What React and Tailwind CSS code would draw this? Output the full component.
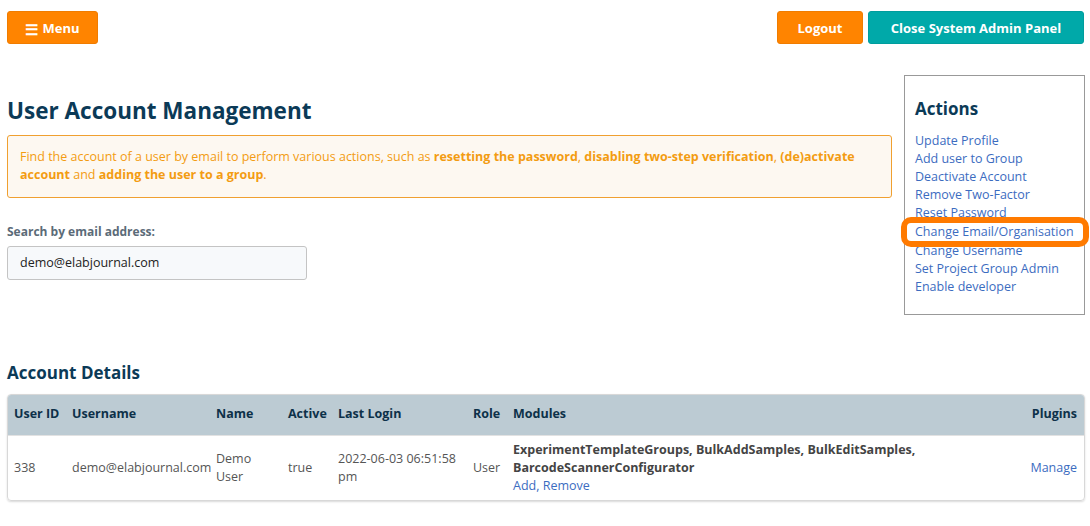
const actions = [
  'Update Profile',
  'Add user to Group',
  'Deactivate Account',
  'Remove Two-Factor',
  'Reset Password',
  'Change Email/Organisation',
  'Change Username',
  'Set Project Group Admin',
  'Enable developer',
];

export default function App() {
  return (
    <div className="min-h-[526px] bg-white text-[12.5px] text-[#555] font-['Open_Sans',sans-serif] pl-[7px] pr-[5px] pt-[11px]">
      <div className="flex items-start justify-between">
        <button className="h-[33px] w-[91px] rounded-[3px] bg-[#ff8400] border border-[#f07c00] text-white font-bold text-[13px] flex items-center justify-center gap-1 pt-[3px]">
          <span className="text-[15px] leading-none">☰</span> Menu
        </button>
        <div className="flex gap-[5px] mr-[1px]">
          <button className="h-[33px] w-[86px] rounded-[3px] bg-[#ff8400] border border-[#f07c00] text-white font-bold text-[13px] pt-[3px]">Logout</button>
          <button className="h-[33px] w-[216px] rounded-[3px] bg-[#00a9a9] border border-[#009d9d] text-white font-bold text-[13px] pt-[3px]">Close System Admin Panel</button>
        </div>
      </div>

      <div className="flex gap-[12px] mt-[31px]">
        <div className="flex-1">
          <h1 className="mt-[21px] text-[22.5px] font-bold text-[#0b3a57] leading-[30px]">User Account Management</h1>
          <div className="mt-[9px] rounded-[3px] border border-[#f0a030] bg-[#fdf8f1] text-[#f39c12] px-[12px] pt-[12px] pb-[13px] leading-[18px]">
            Find the account of a user by email to perform various actions, such as <b>resetting the password</b>, <b>disabling two-step verification</b>, <b>(de)activate account</b> and <b>adding the user to a group</b>.
          </div>
          <label className="block mt-[25px] text-[12px] font-bold text-[#5b6b78]">Search by email address:</label>
          <div className="mt-[5px] w-[300px] h-[34px] rounded-[3px] border border-[#c4c4c4] bg-[#f7f9fb] px-[12px] flex items-center text-[#222]">demo@elabjournal.com</div>
        </div>
        <div className="w-[181px] h-[240px] border border-[#999] px-[10px] pt-[21px]">
          <h2 className="text-[17px] font-bold text-[#0b3a57] leading-[24px]">Actions</h2>
          <ul className="mt-[11px] leading-[18px] text-[#3c6cbf] whitespace-nowrap">
            {actions.map((a) => (
              <li key={a} className={a === 'Change Email/Organisation' ? 'relative z-10 my-[1px]' : ''}>
                {a === 'Change Email/Organisation' && (
                  <span className="absolute left-[-14px] right-[-15px] top-[-6px] bottom-[-6px] border-[6px] border-[#ff7a00] rounded-[10px] bg-white -z-10"></span>
                )}
                <a href="#">{a}</a>
              </li>
            ))}
          </ul>
        </div>
      </div>

      <h2 className="mt-[46px] text-[17px] font-bold text-[#0b3a57] leading-[24px]">Account Details</h2>
      <div className="mt-[9px] rounded-[4px] border border-[#d8d8d8] shadow-[0_1px_2px_rgba(0,0,0,0.15)] overflow-hidden">
        <table className="w-full table-fixed border-collapse">
          <colgroup>
            <col className="w-[58px]" />
            <col className="w-[144px]" />
            <col className="w-[72px]" />
            <col className="w-[50px]" />
            <col className="w-[137px]" />
            <col className="w-[38px]" />
            <col />
            <col className="w-[66px]" />
          </colgroup>
          <thead>
            <tr className="bg-[#bccbd3] text-[#0d3149] font-bold h-[40px] text-left whitespace-nowrap">
              <th className="px-[6px]">User ID</th>
              <th className="px-[6px]">Username</th>
              <th className="px-[6px]">Name</th>
              <th className="px-[6px]">Active</th>
              <th className="px-[6px]">Last Login</th>
              <th className="px-[4px]">Role</th>
              <th className="px-[6px]">Modules</th>
              <th className="px-[7px] text-right">Plugins</th>
            </tr>
          </thead>
          <tbody>
            <tr className="leading-[18px] border-t border-[#e2e2e2]">
              <td className="px-[6px] py-[5px]">338</td>
              <td className="px-[6px] py-[5px] whitespace-nowrap">demo@elabjournal.com</td>
              <td className="px-[6px] py-[5px]">Demo User</td>
              <td className="px-[6px] py-[5px]">true</td>
              <td className="px-[6px] py-[5px]">2022-06-03 06:51:58 pm</td>
              <td className="px-[4px] py-[5px]">User</td>
              <td className="px-[6px] py-[5px]">
                <b className="text-[#444]">ExperimentTemplateGroups, BulkAddSamples, BulkEditSamples, BarcodeScannerConfigurator</b>
                <div className="text-[#3c6cbf]"><a href="#">Add</a>, <a href="#">Remove</a></div>
              </td>
              <td className="px-[7px] py-[5px] text-right text-[#3c6cbf]"><a href="#">Manage</a></td>
            </tr>
          </tbody>
        </table>
      </div>
    </div>
  );
}
